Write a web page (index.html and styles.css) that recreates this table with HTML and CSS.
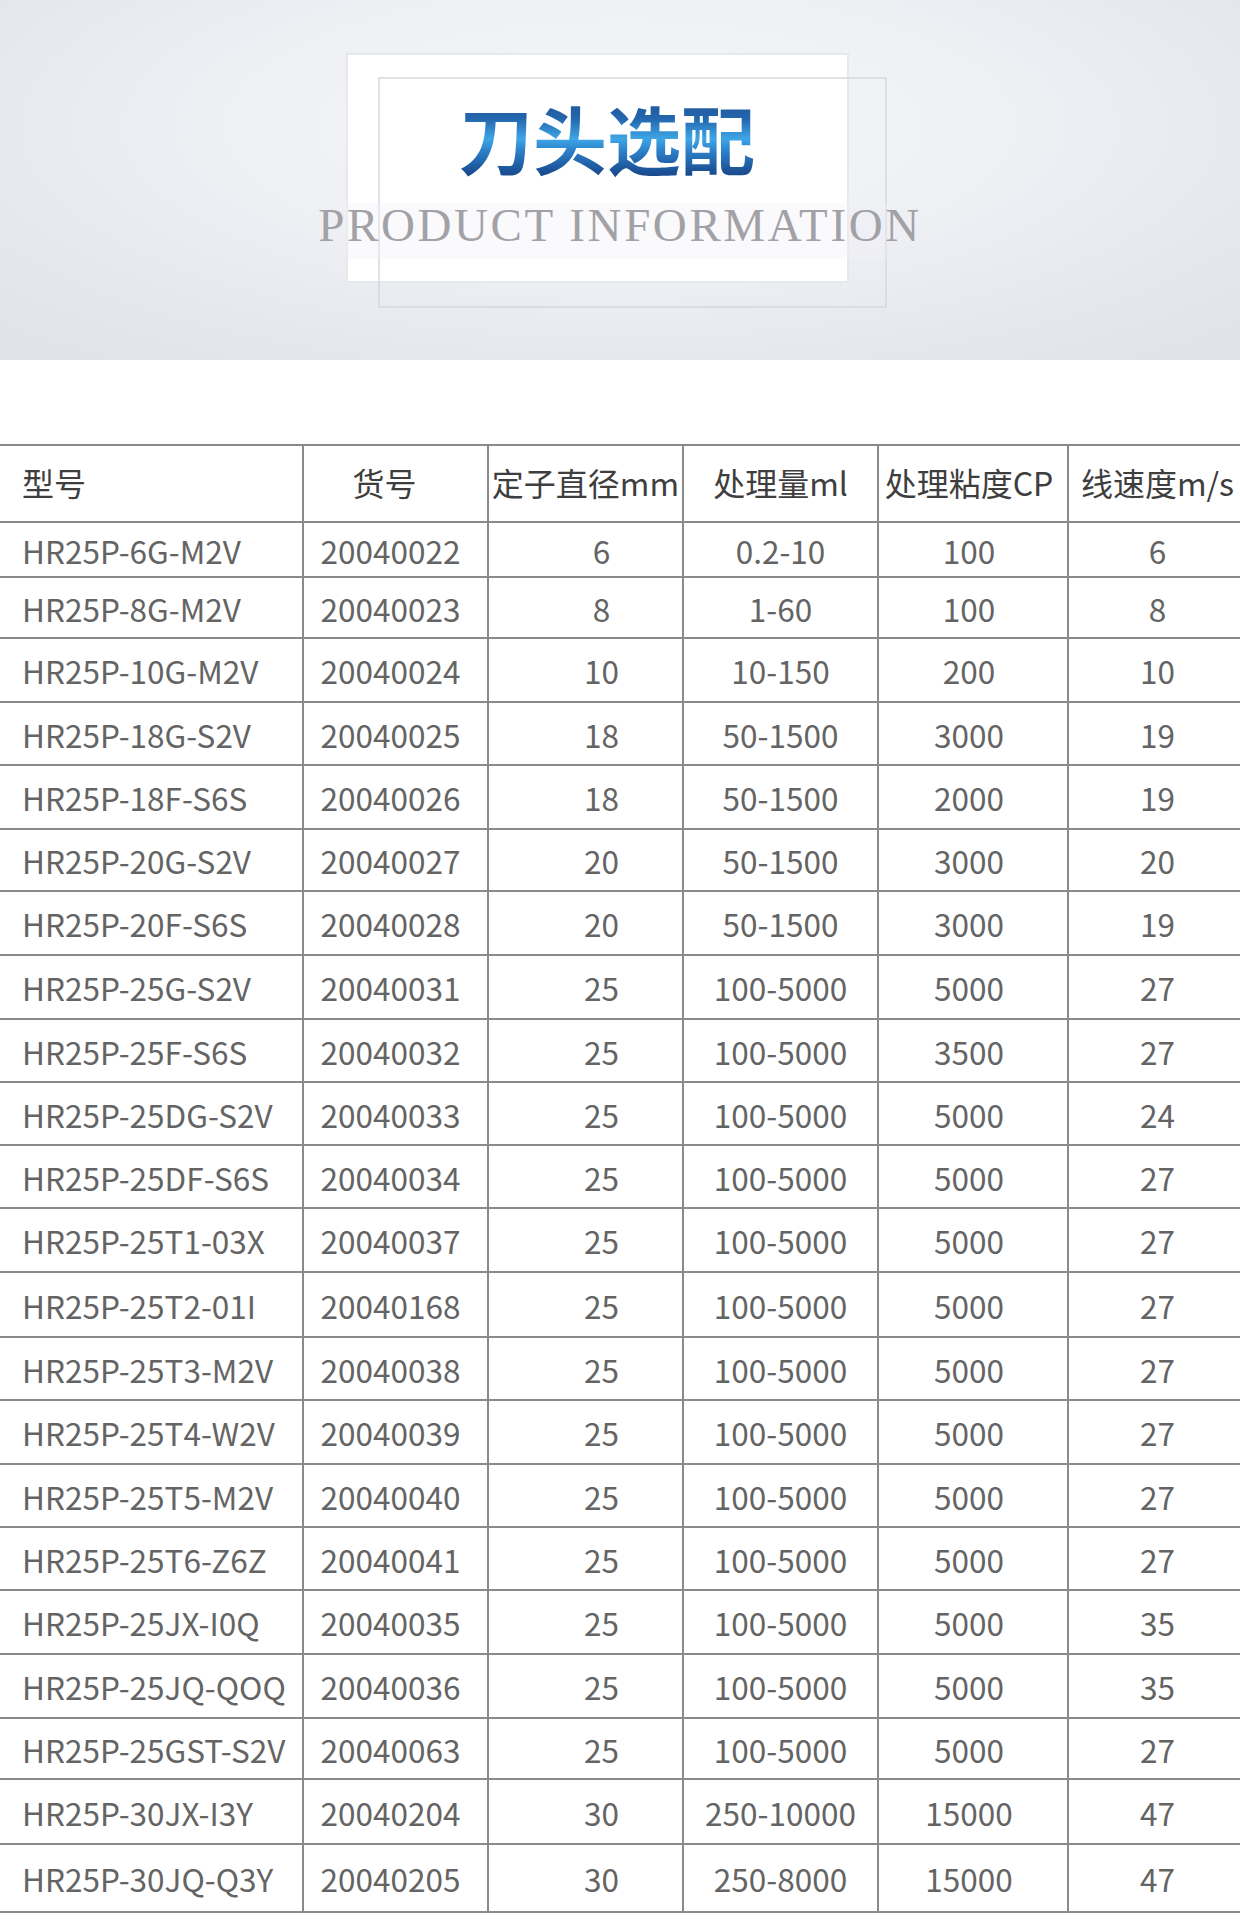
FILE: index.html
```html
<!DOCTYPE html>
<html lang="zh-CN">
<head>
<meta charset="utf-8">
<title>刀头选配</title>
<link rel="stylesheet" href="styles.css">
</head>
<body>
<header class="banner">
  <div class="frame frame-a"></div>
  <div class="frame frame-b"></div>
  <div class="band"></div>
  <div class="banner-text">
    <h1 class="title">刀头选配</h1>
    <p class="subtitle">PRODUCT INFORMATION</p>
  </div>
</header>

<section class="spec">
  <div class="grid">
    <div class="cell th">型号</div><div class="cell th">货号</div><div class="cell th">定子直径mm</div><div class="cell th">处理量ml</div><div class="cell th">处理粘度CP</div><div class="cell th">线速度m/s</div>

    <div class="cell">HR25P-6G-M2V</div><div class="cell">20040022</div><div class="cell">6</div><div class="cell">0.2-10</div><div class="cell">100</div><div class="cell">6</div>
    <div class="cell">HR25P-8G-M2V</div><div class="cell">20040023</div><div class="cell">8</div><div class="cell">1-60</div><div class="cell">100</div><div class="cell">8</div>
    <div class="cell">HR25P-10G-M2V</div><div class="cell">20040024</div><div class="cell">10</div><div class="cell">10-150</div><div class="cell">200</div><div class="cell">10</div>
    <div class="cell">HR25P-18G-S2V</div><div class="cell">20040025</div><div class="cell">18</div><div class="cell">50-1500</div><div class="cell">3000</div><div class="cell">19</div>
    <div class="cell">HR25P-18F-S6S</div><div class="cell">20040026</div><div class="cell">18</div><div class="cell">50-1500</div><div class="cell">2000</div><div class="cell">19</div>
    <div class="cell">HR25P-20G-S2V</div><div class="cell">20040027</div><div class="cell">20</div><div class="cell">50-1500</div><div class="cell">3000</div><div class="cell">20</div>
    <div class="cell">HR25P-20F-S6S</div><div class="cell">20040028</div><div class="cell">20</div><div class="cell">50-1500</div><div class="cell">3000</div><div class="cell">19</div>
    <div class="cell">HR25P-25G-S2V</div><div class="cell">20040031</div><div class="cell">25</div><div class="cell">100-5000</div><div class="cell">5000</div><div class="cell">27</div>
    <div class="cell">HR25P-25F-S6S</div><div class="cell">20040032</div><div class="cell">25</div><div class="cell">100-5000</div><div class="cell">3500</div><div class="cell">27</div>
    <div class="cell">HR25P-25DG-S2V</div><div class="cell">20040033</div><div class="cell">25</div><div class="cell">100-5000</div><div class="cell">5000</div><div class="cell">24</div>
    <div class="cell">HR25P-25DF-S6S</div><div class="cell">20040034</div><div class="cell">25</div><div class="cell">100-5000</div><div class="cell">5000</div><div class="cell">27</div>
    <div class="cell">HR25P-25T1-03X</div><div class="cell">20040037</div><div class="cell">25</div><div class="cell">100-5000</div><div class="cell">5000</div><div class="cell">27</div>
    <div class="cell">HR25P-25T2-01I</div><div class="cell">20040168</div><div class="cell">25</div><div class="cell">100-5000</div><div class="cell">5000</div><div class="cell">27</div>
    <div class="cell">HR25P-25T3-M2V</div><div class="cell">20040038</div><div class="cell">25</div><div class="cell">100-5000</div><div class="cell">5000</div><div class="cell">27</div>
    <div class="cell">HR25P-25T4-W2V</div><div class="cell">20040039</div><div class="cell">25</div><div class="cell">100-5000</div><div class="cell">5000</div><div class="cell">27</div>
    <div class="cell">HR25P-25T5-M2V</div><div class="cell">20040040</div><div class="cell">25</div><div class="cell">100-5000</div><div class="cell">5000</div><div class="cell">27</div>
    <div class="cell">HR25P-25T6-Z6Z</div><div class="cell">20040041</div><div class="cell">25</div><div class="cell">100-5000</div><div class="cell">5000</div><div class="cell">27</div>
    <div class="cell">HR25P-25JX-I0Q</div><div class="cell">20040035</div><div class="cell">25</div><div class="cell">100-5000</div><div class="cell">5000</div><div class="cell">35</div>
    <div class="cell">HR25P-25JQ-QOQ</div><div class="cell">20040036</div><div class="cell">25</div><div class="cell">100-5000</div><div class="cell">5000</div><div class="cell">35</div>
    <div class="cell">HR25P-25GST-S2V</div><div class="cell">20040063</div><div class="cell">25</div><div class="cell">100-5000</div><div class="cell">5000</div><div class="cell">27</div>
    <div class="cell">HR25P-30JX-I3Y</div><div class="cell">20040204</div><div class="cell">30</div><div class="cell">250-10000</div><div class="cell">15000</div><div class="cell">47</div>
    <div class="cell">HR25P-30JQ-Q3Y</div><div class="cell">20040205</div><div class="cell">30</div><div class="cell">250-8000</div><div class="cell">15000</div><div class="cell">47</div>
  </div>
</section>
</body>
</html>
```

FILE: styles.css
```css
* { box-sizing: border-box; }

html, body {
  margin: 0;
  padding: 0;
  background: #ffffff;
}

body {
  width: 1240px;
  font-family: "Noto Sans CJK SC", "Noto Sans", sans-serif;
}

.banner {
  position: relative;
  height: 360px;
  overflow: hidden;
  background:
    radial-gradient(ellipse 70% 85% at 50% 35%, #f5f6f8 0%, #eff0f4 45%, #e6e7ee 80%, #e1e3ea 100%);
}

.frame {
  position: absolute;
}

.frame-a {
  left: 346px;
  top: 53px;
  width: 503px;
  height: 230px;
  background: #ffffff;
  border: 2px solid #e7e8ec;
}

.frame-b {
  left: 378px;
  top: 77px;
  width: 509px;
  height: 231px;
  border: 2px solid rgba(214, 216, 222, 0.75);
}

.band {
  position: absolute;
  left: 346px;
  top: 203px;
  width: 541px;
  height: 56px;
  background: rgba(240, 241, 245, 0.35);
}

.banner-text {
  position: relative;
  display: flex;
  flex-direction: column;
  align-items: center;
  padding-top: 91px;
}

.title {
  margin: 0 26px 0 0;
  font-family: "Noto Sans CJK SC", sans-serif;
  font-weight: 700;
  font-size: 74px;
  line-height: 92px;
  color: #1f5aa0;
  background: linear-gradient(180deg, #1c4f92 0%, #2466ad 30%, #3ea6e6 52%, #2b7ec8 66%, #1b4f93 88%, #173f80 100%);
  -webkit-background-clip: text;
  background-clip: text;
  -webkit-text-fill-color: transparent;
}

.subtitle {
  margin: 16px 0 0 0;
  font-family: "Liberation Serif", "Times New Roman", serif;
  font-size: 47px;
  line-height: 52px;
  letter-spacing: 2.6px;
  color: #a2a2a6;
  white-space: nowrap;
}

.spec {
  padding-top: 84px;
}

.grid {
  display: grid;
  grid-template-columns: 302px 185px 195px 195px 190px 1fr;
  grid-template-rows: 77px 55px 61px 64px 63px 64px 62px 64px 64px 63px 63px 63px 64px 65px 63px 64px 63px 63px 64px 64px 61px 65px 68px;
  border-top: 2px solid #8a8a8a;
}

.cell {
  display: flex;
  align-items: center;
  justify-content: center;
  border-bottom: 2px solid #8a8a8a;
  border-left: 2px solid #8a8a8a;
  font-size: 31.5px;
  color: #646464;
  white-space: nowrap;
  padding-top: 0;
}

.cell:nth-child(6n+1) {
  justify-content: flex-start;
  border-left: none;
  padding-left: 22px;
}

.cell:nth-child(6n+2) { padding-right: 10px; }
.cell:nth-child(6n+3) { padding-left: 32px; }
.cell:nth-child(6n+5) { padding-right: 8px; }
.cell:nth-child(6n+6) { padding-left: 6px; }

.cell.th {
  font-size: 32px;
  color: #3e3e3e;
  padding-top: 0;
  padding-bottom: 3px;
}

.cell.th:nth-child(2) { padding-right: 22px; }
.cell.th:nth-child(3) { padding-left: 0; }
```
